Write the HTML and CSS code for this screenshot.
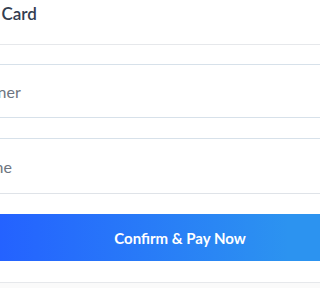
FILE: index.html
```html
<!DOCTYPE html>
<html lang="en">
<head>
<meta charset="utf-8">
<title>Pay with Card</title>
<link rel="stylesheet" href="styles.css">
</head>
<body>
<div class="page">
  <form class="form">
    <h2 class="title">Pay with Card</h2>
    <input class="field field-first" type="text" placeholder="Card Owner">
    <input class="field field-second" type="text" placeholder="First Name">
    <button class="pay" type="button">Confirm &amp; Pay Now</button>
  </form>
  <div class="footer"></div>
</div>
</body>
</html>
```

FILE: styles.css
```css
html, body {
  margin: 0;
  padding: 0;
  background: #ffffff;
}
body {
  font-family: Lato, "Open Sans", sans-serif;
}
.page {
  display: flex;
  flex-direction: column;
  width: 100%;
  height: 288px;
  overflow: hidden;
}
.form {
  display: flex;
  flex-direction: column;
  flex: none;
  margin: 0 0 0 -78px;
  width: 516px;
}
.title {
  margin: 0;
  box-sizing: border-box;
  height: 45px;
  padding: 4px 0 0 11px;
  font-size: 17px;
  line-height: 20px;
  font-weight: 600;
  color: #333d50;
  border-bottom: 1px solid #e6e8eb;
}
.field {
  display: block;
  width: 100%;
  box-sizing: border-box;
  margin: 19px 0 0;
  padding: 0 12px;
  height: 54px;
  border: 1px solid #d7e1ea;
  background: #ffffff;
  font-family: Lato, "Open Sans", sans-serif;
  font-size: 16px;
  color: #2e3a4e;
  outline: none;
}
.field::placeholder {
  color: #6d7480;
}
.field-second {
  margin-top: 20px;
  height: 56px;
  border-bottom-color: #dfe3e8;
}
.pay {
  margin: 20px 0 0;
  height: 47px;
  border: 0;
  padding: 0;
  background: linear-gradient(90deg, #2462ff 15%, #2c93f0 71%);
  color: #ffffff;
  font-family: Lato, "Open Sans", sans-serif;
  font-size: 15px;
  font-weight: 700;
  cursor: pointer;
}
.footer {
  margin: 21px 0 0 0;
  flex: 1;
  border-top: 1px solid #e6e8eb;
  background: #fafafa;
}
```
